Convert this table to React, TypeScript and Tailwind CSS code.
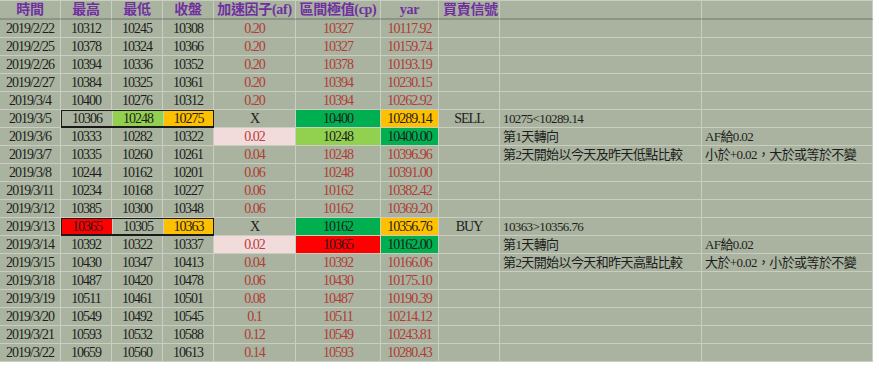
import React from 'react';

type Cell = { t: string; c?: string };
type Row = { cells: Cell[]; box?: boolean };

const red = 'text-[#b23a37]';
const lime = 'bg-[#92d050]';
const amber = 'bg-[#ffc000]';
const green = 'bg-[#00b050]';
const scarlet = 'bg-[#ff0000]';
const pink = 'bg-[#f2dcdb] text-[#c0393b]';

// plain row: af / cp / yar printed in red
const plain = (d: string, hi: string, lo: string, cl: string, af: string, cp: string, yar: string, n1 = '', n2 = ''): Row => ({
  cells: [
    { t: d },
    { t: hi },
    { t: lo },
    { t: cl },
    { t: af, c: red },
    { t: cp, c: red },
    { t: yar, c: red },
    { t: '' },
    { t: n1 },
    { t: n2 },
  ],
});

const rows: Row[] = [
  plain('2019/2/22', '10312', '10245', '10308', '0.20', '10327', '10117.92'),
  plain('2019/2/25', '10378', '10324', '10366', '0.20', '10327', '10159.74'),
  plain('2019/2/26', '10394', '10336', '10352', '0.20', '10378', '10193.19'),
  plain('2019/2/27', '10384', '10325', '10361', '0.20', '10394', '10230.15'),
  plain('2019/3/4', '10400', '10276', '10312', '0.20', '10394', '10262.92'),
  {
    box: true,
    cells: [
      { t: '2019/3/5' },
      { t: '10306' },
      { t: '10248', c: lime },
      { t: '10275', c: amber },
      { t: 'X' },
      { t: '10400', c: green },
      { t: '10289.14', c: amber },
      { t: 'SELL' },
      { t: '10275<10289.14' },
      { t: '' },
    ],
  },
  {
    cells: [
      { t: '2019/3/6' },
      { t: '10333' },
      { t: '10282' },
      { t: '10322' },
      { t: '0.02', c: pink },
      { t: '10248', c: lime },
      { t: '10400.00', c: green },
      { t: '' },
      { t: '第1天轉向' },
      { t: 'AF給0.02' },
    ],
  },
  plain('2019/3/7', '10335', '10260', '10261', '0.04', '10248', '10396.96', '第2天開始以今天及昨天低點比較', '小於+0.02，大於或等於不變'),
  plain('2019/3/8', '10244', '10162', '10201', '0.06', '10248', '10391.00'),
  plain('2019/3/11', '10234', '10168', '10227', '0.06', '10162', '10382.42'),
  plain('2019/3/12', '10385', '10300', '10348', '0.06', '10162', '10369.20'),
  {
    box: true,
    cells: [
      { t: '2019/3/13' },
      { t: '10365', c: scarlet },
      { t: '10305' },
      { t: '10363', c: amber },
      { t: 'X' },
      { t: '10162', c: green },
      { t: '10356.76', c: amber },
      { t: 'BUY' },
      { t: '10363>10356.76' },
      { t: '' },
    ],
  },
  {
    cells: [
      { t: '2019/3/14' },
      { t: '10392' },
      { t: '10322' },
      { t: '10337' },
      { t: '0.02', c: pink },
      { t: '10365', c: scarlet },
      { t: '10162.00', c: green },
      { t: '' },
      { t: '第1天轉向' },
      { t: 'AF給0.02' },
    ],
  },
  plain('2019/3/15', '10430', '10347', '10413', '0.04', '10392', '10166.06', '第2天開始以今天和昨天高點比較', '大於+0.02，小於或等於不變'),
  plain('2019/3/18', '10487', '10420', '10478', '0.06', '10430', '10175.10'),
  plain('2019/3/19', '10511', '10461', '10501', '0.08', '10487', '10190.39'),
  plain('2019/3/20', '10549', '10492', '10545', '0.1', '10511', '10214.12'),
  plain('2019/3/21', '10593', '10532', '10588', '0.12', '10549', '10243.81'),
  plain('2019/3/22', '10659', '10560', '10613', '0.14', '10593', '10280.43'),
];

const headers = ['時間', '最高', '最低', '收盤', '加速因子(af)', '區間極值(cp)', 'yar', '買賣信號', '', ''];

const base = 'flex items-center h-[18px] border-r border-b border-[#c8cfc1] whitespace-nowrap leading-none';

function DataCell({ cell, col }: { cell: Cell; col: number }) {
  const notes = col >= 8;
  return (
    <div
      className={`${base} ${notes ? 'justify-start pl-[3px] text-[13px] tracking-[-0.6px]' : 'justify-center'} ${cell.c ?? ''}`}
    >
      {cell.t}
    </div>
  );
}

export default function App() {
  return (
    <div className="w-[879px] h-[374px] bg-white">
      <div className="w-[873px] bg-[#a9b39f] text-[#1d1d1d] text-[14px] tracking-[-1px] font-['Liberation_Serif','Noto_Sans_CJK_TC',serif] grid grid-cols-[61px_51px_51px_51px_82px_85px_58px_61px_202px_171px] border-t border-[#c8cfc1]">
        {headers.map((h, i) => (
          <div
            key={i}
            className={`flex items-center h-[19px] border-r border-[#c8cfc1] border-b-2 border-b-[#8b9585] text-[#7030a0] font-bold text-[14px] tracking-[-0.3px] ${i === 7 ? 'justify-start pl-[4px]' : 'justify-center'}`}
          >
            {h}
          </div>
        ))}
        {rows.map((r, ri) => (
          <React.Fragment key={ri}>
            {r.cells.map((cell, ci) => {
              if (r.box && ci === 1) {
                return (
                  <div key={ci} className="col-span-3 h-[18px] grid grid-cols-[51px_51px_49px] border-[1.5px] border-[#1a1a1a] border-b-2">
                    {r.cells.slice(1, 4).map((bc, bi) => (
                      <div
                        key={bi}
                        className={`flex items-center justify-center leading-none ${bi < 2 ? 'border-r border-[#c8cfc1]' : ''} ${bc.c ?? ''}`}
                      >
                        {bc.t}
                      </div>
                    ))}
                  </div>
                );
              }
              if (r.box && (ci === 2 || ci === 3)) return null;
              return <DataCell key={ci} cell={cell} col={ci} />;
            })}
          </React.Fragment>
        ))}
      </div>
    </div>
  );
}
